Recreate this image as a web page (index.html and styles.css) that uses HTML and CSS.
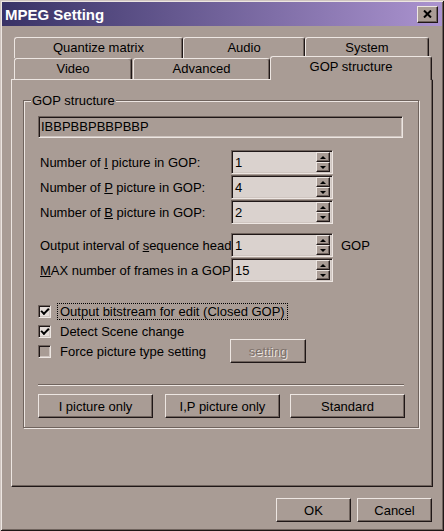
FILE: index.html
```html
<html lang="en">
<head>
    <meta charset="UTF-8">
    <meta name="viewport" content="width=device-width, initial-scale=1.0">
    <title>MPEG Setting</title>
    <link rel="stylesheet" href="styles.css">
</head>
<body>
    <div class="window">
        <div class="titlebar">
            <span class="title">MPEG Setting</span>
            <button class="close" type="button">
                <svg width="9" height="8" viewBox="0 0 9 8">
                    <path d="M1 0.5 L8 7.5 M8 0.5 L1 7.5" stroke="#000" stroke-width="2"/>
                </svg>
            </button>
        </div>

        <div class="content">
            <!-- two rows of tabs, selected one sits in the front row -->
            <div class="tabs">
                <div class="tab-row">
                    <div class="tab tab-quant">Quantize matrix</div>
                    <div class="tab tab-audio">Audio</div>
                    <div class="tab tab-system">System</div>
                </div>
                <div class="tab-row">
                    <div class="tab tab-video">Video</div>
                    <div class="tab tab-adv">Advanced</div>
                    <div class="tab tab-gop selected">GOP structure</div>
                </div>
            </div>

            <div class="panel">
                <fieldset class="group">
                    <legend>GOP structure</legend>
                    <div class="group-body">
                        <div class="pattern">IBBPBBPBBPBBP</div>

                        <div class="spin-list">
                            <div class="spin-row">
                                <label class="spin-label">Number of <u>I</u> picture in GOP:</label>
                                <div class="spin">
                                    <span class="spin-value">1</span>
                                    <div class="spin-btns"><span class="arrow up"></span><span class="arrow down"></span></div>
                                </div>
                            </div>
                            <div class="spin-row">
                                <label class="spin-label">Number of <u>P</u> picture in GOP:</label>
                                <div class="spin">
                                    <span class="spin-value">4</span>
                                    <div class="spin-btns"><span class="arrow up"></span><span class="arrow down"></span></div>
                                </div>
                            </div>
                            <div class="spin-row">
                                <label class="spin-label">Number of <u>B</u> picture in GOP:</label>
                                <div class="spin">
                                    <span class="spin-value">2</span>
                                    <div class="spin-btns"><span class="arrow up"></span><span class="arrow down"></span></div>
                                </div>
                            </div>
                        </div>

                        <div class="spin-list second">
                            <div class="spin-row">
                                <label class="spin-label">Output interval of <u>s</u>equence header:</label>
                                <div class="spin">
                                    <span class="spin-value">1</span>
                                    <div class="spin-btns"><span class="arrow up"></span><span class="arrow down"></span></div>
                                </div>
                                <span class="unit">GOP</span>
                            </div>
                            <div class="spin-row">
                                <label class="spin-label"><u>M</u>AX number of frames in a GOP</label>
                                <div class="spin">
                                    <span class="spin-value">15</span>
                                    <div class="spin-btns"><span class="arrow up"></span><span class="arrow down"></span></div>
                                </div>
                            </div>
                        </div>

                        <div class="checks">
                            <div class="check-row">
                                <span class="box checked"></span>
                                <span class="check-label focus">Output bitstream for edit (Closed GOP)</span>
                            </div>
                            <div class="check-row">
                                <span class="box checked"></span>
                                <span class="check-label">Detect Scene change</span>
                            </div>
                            <div class="check-row">
                                <span class="box disabled"></span>
                                <span class="check-label fixed">Force picture type setting</span>
                                <button class="btn btn-setting" type="button" disabled>setting</button>
                            </div>
                        </div>

                        <div class="separator"></div>

                        <div class="preset-row">
                            <button class="btn preset" type="button">I picture only</button>
                            <button class="btn preset" type="button">I,P picture only</button>
                            <button class="btn preset" type="button">Standard</button>
                        </div>
                    </div>
                </fieldset>
            </div>

            <div class="footer">
                <button class="btn btn-footer" type="button">OK</button>
                <button class="btn btn-footer" type="button">Cancel</button>
            </div>
        </div>
    </div>
</body>
</html>
```

FILE: styles.css
```css
/* dialog colours */
body {
    margin: 0;
    padding: 0;
    background-color: #a99c95;
    font-family: "Liberation Sans", Arial, sans-serif;
    font-size: 13px;
    color: #000;
}

.window {
    width: 444px;
    height: 531px;
    box-sizing: border-box;
    padding: 2px;
    background-color: #a99c95;
    box-shadow: inset 1px 1px #cfc5c0, inset -1px -1px #1f1717,
                inset 2px 2px #ede6e2, inset -2px -2px #6f635d;
    display: flex;
    flex-direction: column;
}

/* title bar */
.titlebar {
    height: 24px;
    flex: none;
    display: flex;
    align-items: center;
    justify-content: space-between;
    padding: 0 4px 0 3px;
    background: linear-gradient(to right, #383266, #ab93cf);
    color: #fff;
}

.title {
    font-weight: bold;
    font-size: 15px;
}

.close {
    width: 21px;
    height: 17px;
    padding: 0;
    margin: 0;
    display: flex;
    align-items: center;
    justify-content: center;
    background-color: #a99c95;
    border: 1px solid;
    border-color: #ede6e2 #1f1717 #1f1717 #ede6e2;
    box-shadow: inset -1px -1px #6f635d;
}

.content {
    padding: 11px 9px 0 9px;
}

/* tabs */
.tab-row {
    display: flex;
    height: 21px;
    padding-left: 3px;
}

.tab {
    height: 21px;
    box-sizing: border-box;
    border-top: 1px solid #ede6e2;
    border-left: 1px solid #ede6e2;
    border-right: 1px solid #1f1717;
    border-radius: 3px 3px 0 0;
    box-shadow: inset -1px 0 #6f635d;
    background-color: #a99c95;
    text-align: center;
    line-height: 19px;
    white-space: nowrap;
}

.tab-quant { width: 169px; }
.tab-audio { width: 122px; }
.tab-system { width: 124px; }
.tab-video { width: 118px; margin-right: 1px; }
.tab-adv { width: 137px; }
.tab-gop { width: 162px; }

.tab.selected {
    height: 24px;
    margin-top: -2px;
    position: relative;
    z-index: 1;
}

/* tab page */
.panel {
    width: 422px;
    height: 408px;
    box-sizing: border-box;
    border-top: 1px solid #ede6e2;
    border-left: 1px solid #ede6e2;
    border-right: 1px solid #1f1717;
    border-bottom: 1px solid #1f1717;
    box-shadow: inset -1px -1px #6f635d;
    padding: 13px 0 0 11px;
}

.group {
    width: 396px;
    box-sizing: border-box;
    margin: 0;
    padding: 0;
    border: 1px solid #6f635d;
    box-shadow: 1px 1px #ede6e2, inset 1px 1px #ede6e2;
}

.group legend {
    margin-left: 7px;
    padding: 0 1px;
    line-height: 15px;
    background-color: #a99c95;
}

.group-body {
    padding: 8px 0 9px 14px;
}

.pattern {
    width: 365px;
    height: 22px;
    box-sizing: border-box;
    border: 1px solid;
    border-color: #6f635d #ede6e2 #ede6e2 #6f635d;
    box-shadow: inset 1px 1px #1f1717, inset -1px -1px #cfc5c0;
    padding-left: 2px;
    line-height: 20px;
}

/* spin boxes */
.spin-list {
    margin-top: 12px;
    display: flex;
    flex-direction: column;
    gap: 1px;
}

.spin-list.second {
    margin-top: 9px;
}

.spin-row {
    display: flex;
    align-items: center;
    height: 24px;
    padding-left: 2px;
}

.spin-label {
    width: 191px;
    overflow: hidden;
    white-space: nowrap;
}

.spin {
    width: 102px;
    height: 24px;
    box-sizing: border-box;
    display: flex;
    align-items: center;
    justify-content: space-between;
    border: 1px solid;
    border-color: #6f635d #ede6e2 #ede6e2 #6f635d;
    box-shadow: inset 1px 1px #1f1717, inset -1px -1px #cfc5c0;
    background-color: #dad2ce;
    padding: 2px 2px 2px 3px;
}

.spin-btns {
    width: 14px;
    height: 20px;
    display: flex;
    flex-direction: column;
}

.arrow {
    flex: 1;
    box-sizing: border-box;
    border: 1px solid;
    border-color: #ede6e2 #1f1717 #1f1717 #ede6e2;
    box-shadow: inset -1px -1px #6f635d;
    background-color: #a99c95;
    display: flex;
    align-items: center;
    justify-content: center;
}

.arrow::after {
    content: "";
    border-left: 3px solid transparent;
    border-right: 3px solid transparent;
}

.arrow.up::after {
    border-bottom: 3px solid #000;
}

.arrow.down::after {
    border-top: 3px solid #000;
}

.unit {
    margin-left: 8px;
}

/* check boxes */
.checks {
    margin-top: 19px;
}

.check-row {
    display: flex;
    align-items: center;
    height: 20px;
}

.box {
    width: 13px;
    height: 13px;
    box-sizing: border-box;
    border: 1px solid;
    border-color: #6f635d #ede6e2 #ede6e2 #6f635d;
    box-shadow: inset 1px 1px #1f1717, inset -1px -1px #cfc5c0;
    background-color: #e4dcd8;
    display: flex;
    align-items: center;
    justify-content: center;
}

.box.checked::after {
    content: "";
    width: 6px;
    height: 3px;
    margin-top: -2px;
    border-left: 2px solid #000;
    border-bottom: 2px solid #000;
    transform: rotate(-45deg);
}

.box.disabled {
    background-color: #a99c95;
}

.check-label {
    margin-left: 7px;
    padding: 0 2px;
    line-height: 15px;
    white-space: nowrap;
}

.check-label.focus {
    outline: 1px dotted #000;
}

.check-label.fixed {
    width: 172px;
    box-sizing: border-box;
}

/* buttons */
.btn {
    height: 24px;
    margin: 0;
    padding: 0;
    box-sizing: border-box;
    font-family: "Liberation Sans", Arial, sans-serif;
    font-size: 13px;
    color: #000;
    background-color: #a99c95;
    border: 1px solid;
    border-color: #ede6e2 #1f1717 #1f1717 #ede6e2;
    box-shadow: inset -1px -1px #6f635d;
}

.btn:disabled {
    color: #7c706a;
    text-shadow: 1px 1px #ede6e2;
}

.btn-setting {
    width: 76px;
}

.separator {
    width: 366px;
    margin-top: 23px;
    border-top: 1px solid #6f635d;
    border-bottom: 1px solid #ede6e2;
}

.preset-row {
    display: flex;
    margin-top: 8px;
}

.preset {
    width: 115px;
}

.preset + .preset {
    margin-left: 12px;
}

.preset:last-child {
    margin-left: 10px;
}

.footer {
    display: flex;
    justify-content: flex-end;
    gap: 6px;
    margin-top: 11px;
    padding-right: 1px;
}

.btn-footer {
    width: 75px;
}
```
